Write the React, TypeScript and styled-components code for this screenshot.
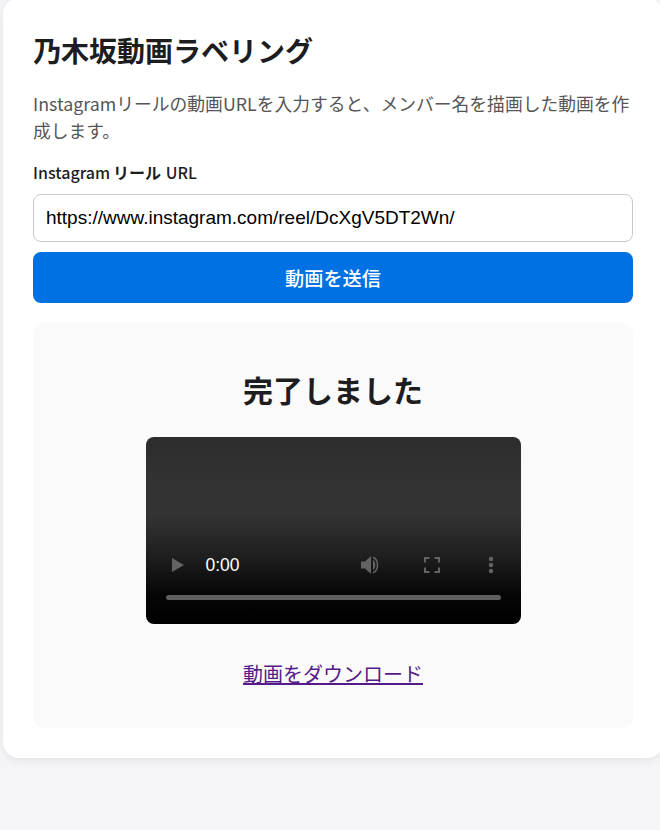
import React from "react";
import styled, { createGlobalStyle } from "styled-components";

const GlobalStyle = createGlobalStyle`
  html, body {
    margin: 0;
    height: 100%;
    overflow: hidden;
    background: #f5f5f7;
  }
  body {
    font-family: "Noto Sans CJK JP", "Noto Sans", sans-serif;
    color: #1d1d1f;
  }
`;

const App = () => {
  return (
    <Page>
      <GlobalStyle />
      <Card>
        <Title>乃木坂動画ラベリング</Title>
        <Lead>Instagramリールの動画URLを入力すると、メンバー名を描画した動画を作成します。</Lead>
        <FieldLabel htmlFor="url">Instagram<Strong>リール</Strong> URL</FieldLabel>
        <UrlInput id="url" readOnly value="https://www.instagram.com/reel/DcXgV5DT2Wn/" />
        <SubmitButton type="button">動画を送信</SubmitButton>
        <ResultPanel>
          <ResultTitle>完了しました</ResultTitle>
          <VideoBox>
            <Controls>
              <ControlRow>
                <PlayIcon viewBox="0 0 12 14">
                  <path d="M0 0 L12 7 L0 14 Z" fill="#636363" />
                </PlayIcon>
                <TimeText>0:00</TimeText>
                <Spacer />
                <ControlIcon viewBox="0 0 20 20" $width={20} $height={20} $mr={43}>
                  <path d="M0 6.500 H4 L10 1 V19 L4 13.500 H0 Z" fill="#636363" />
                  <path d="M12 5 C15 6.500 15 13.500 12 15 Z" fill="#636363" />
                  <path d="M12 1.500 C19 3 19 17 12 18.500 V16.800 C17 15 17 5 12 3.200 Z" fill="#636363" />
                </ControlIcon>
                <ControlIcon viewBox="0 0 16 16" $width={16} $height={16} $mr={48}>
                  <path d="M1 5.500 V1 H5.500 M10.500 1 H15 V5.500 M15 10.500 V15 H10.500 M5.500 15 H1 V10.500" fill="none" stroke="#636363" strokeWidth="2" />
                </ControlIcon>
                <ControlIcon viewBox="0 0 6 18" $width={6} $height={18} $mr={7}>
                  <circle cx="3" cy="3" r="2.200" fill="#636363" />
                  <circle cx="3" cy="9" r="2.200" fill="#636363" />
                  <circle cx="3" cy="15" r="2.200" fill="#636363" />
                </ControlIcon>
              </ControlRow>
              <Timeline />
            </Controls>
          </VideoBox>
          <DownloadLink href="#done">動画をダウンロード</DownloadLink>
        </ResultPanel>
      </Card>
    </Page>
  );
};

const Page = styled.div`
  height: 830px;
  width: 660px;
  overflow: hidden;
  padding-left: 3px;
  box-sizing: border-box;
`;

const Card = styled.div`
  width: 660px;
  box-sizing: border-box;
  margin-top: -2px;
  padding: 32px 30px 30px;
  background: #fff;
  border-radius: 16px;
  box-shadow: 0 2px 10px rgba(0, 0, 0, 0.08);
`;

const Title = styled.h1`
  margin: 0 0 20px;
  font-size: 28px;
  line-height: 40px;
  font-weight: 700;
  color: #1d1d1f;
`;

const Lead = styled.p`
  margin: 0 0 16px;
  font-size: 17.8px;
  line-height: 27px;
  color: #555;
`;

const FieldLabel = styled.label`
  display: block;
  margin-bottom: 10px;
  font-size: 16px;
  line-height: 24px;
  font-weight: 500;
  word-spacing: 1px;
  color: #1d1d1f;
`;

const Strong = styled.span`
  margin-left: 3px;
  font-weight: 700;
`;

const UrlInput = styled.input`
  display: block;
  width: 100%;
  height: 48px;
  box-sizing: border-box;
  margin-bottom: 10px;
  padding: 0 12px;
  border: 1px solid #c8c8c8;
  border-radius: 8px;
  background: #fff;
  font-family: "Liberation Sans", Arial, sans-serif;
  font-size: 19px;
  color: #000;
  outline: none;
`;

const SubmitButton = styled.button`
  display: block;
  width: 100%;
  height: 51px;
  padding: 0;
  border: none;
  border-radius: 8px;
  background: #0071e3;
  color: #fff;
  font-family: inherit;
  font-size: 19.2px;
  font-weight: 500;
  cursor: pointer;
`;

const ResultPanel = styled.div`
  margin-top: 20px;
  padding: 48px 0 40px;
  background: #fafafa;
  border-radius: 12px;
  display: flex;
  flex-direction: column;
  align-items: center;
`;

const ResultTitle = styled.h2`
  margin: 0 0 24px;
  font-family: "Liberation Sans", "Noto Sans CJK JP", sans-serif;
  font-size: 30px;
  line-height: 42px;
  font-weight: 700;
  color: #1d1d1f;
`;

const VideoBox = styled.div`
  width: 375px;
  height: 187px;
  border-radius: 8px;
  overflow: hidden;
  background: linear-gradient(to bottom, #2c2c2c 0%, #333 25%, #333 42%, #1c1c1c 66%, #060606 84%, #000 100%);
  display: flex;
  flex-direction: column;
  justify-content: flex-end;
`;

const Controls = styled.div`
  padding: 0 20px 24px;
`;

const ControlRow = styled.div`
  display: flex;
  align-items: center;
  height: 24px;
  margin-bottom: 18px;
`;

const PlayIcon = styled.svg`
  width: 12px;
  height: 14px;
  margin-left: 6px;
  margin-right: 22px;
`;

const ControlIcon = styled.svg<{ $width: number; $height: number; $mr: number }>`
  width: ${(props) => props.$width}px;
  height: ${(props) => props.$height}px;
  margin-right: ${(props) => props.$mr}px;
`;

const TimeText = styled.span`
  font-family: "Liberation Sans", Arial, sans-serif;
  font-size: 17.5px;
  color: #fff;
`;

const Spacer = styled.div`
  flex: 1;
`;

const Timeline = styled.div`
  height: 5px;
  border-radius: 2.5px;
  background: #5f5f5f;
`;

const DownloadLink = styled.a`
  margin-top: 36px;
  font-size: 20px;
  line-height: 28px;
  color: #551a8b;
  text-decoration: underline;
  text-decoration-thickness: 2px;
`;

export default App;
